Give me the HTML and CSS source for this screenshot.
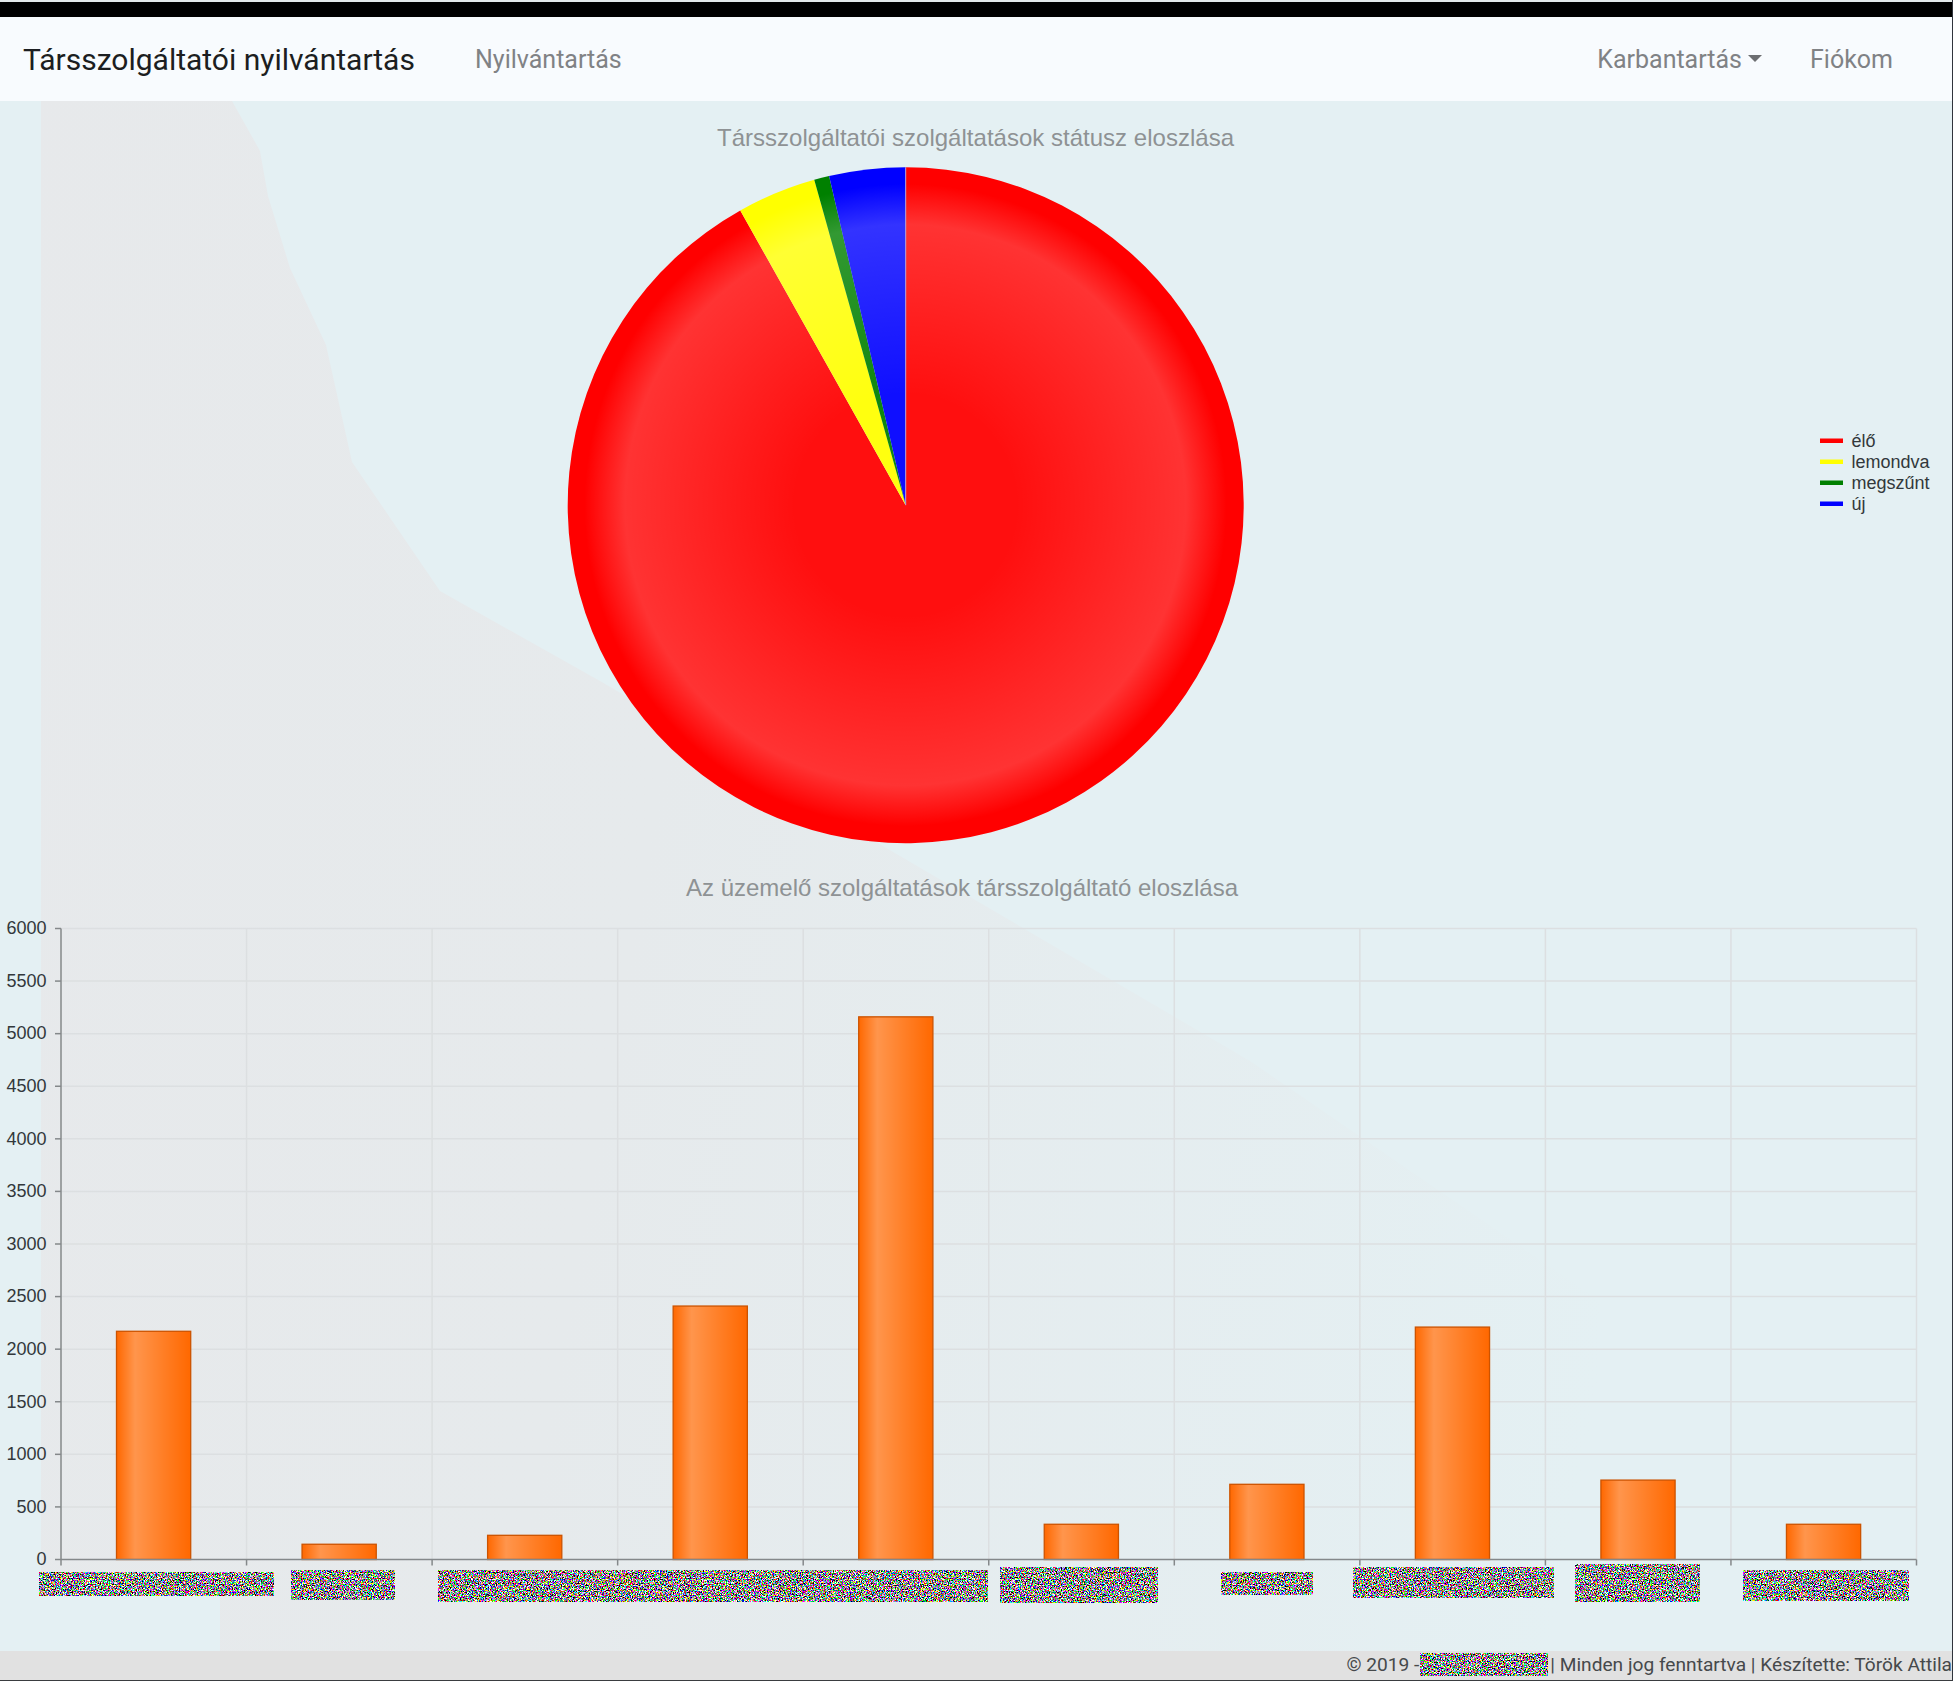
FILE: index.html
```
<!DOCTYPE html>
<html lang="hu">
<head>
    <meta charset="UTF-8">
    <meta name="viewport" content="width=device-width, initial-scale=1.0">
    <title>Társszolgáltatói nyilvántartás</title>
    <link rel="stylesheet" href="styles.css">
</head>
<body>
    <div class="top-strip"></div>

    <nav class="navbar">
        <a class="navbar-brand">Társszolgáltatói nyilvántartás</a>
        <a class="nav-link">Nyilvántartás</a>
        <div class="navbar-right">
            <a class="nav-link dropdown-toggle">Karbantartás</a>
            <a class="nav-link">Fiókom</a>
        </div>
    </nav>

    <main class="charts">
        <svg class="chart" width="1952" height="750" viewBox="0 101 1952 750">
            <defs>
                <radialGradient id="bevel" gradientUnits="userSpaceOnUse" cx="905.5" cy="505" r="338">
                    <stop offset="0" stop-color="#fff" stop-opacity="0.06"/>
                    <stop offset="0.33" stop-color="#fff" stop-opacity="0.06"/>
                    <stop offset="0.83" stop-color="#fff" stop-opacity="0.2"/>
                    <stop offset="0.95" stop-color="#fff" stop-opacity="0"/>
                </radialGradient>
            </defs>
            <text class="chart-title" x="717" y="146" textLength="517">Társszolgáltatói szolgáltatások státusz eloszlása</text>
            <g id="pie"></g>
            <g id="legend"></g>
        </svg>

        <svg class="chart" width="1952" height="800" viewBox="0 851 1952 800">
            <defs>
                <linearGradient id="glass">
                    <stop offset="0" stop-color="#fff" stop-opacity="0"/>
                    <stop offset="0.25" stop-color="#fff" stop-opacity="0.3"/>
                    <stop offset="1" stop-color="#fff" stop-opacity="0"/>
                </linearGradient>
                <filter id="noise" x="0" y="0" width="1" height="1" color-interpolation-filters="sRGB">
                    <feTurbulence type="fractalNoise" baseFrequency="0.83" numOctaves="2" seed="4"/>
                    <feColorMatrix values="9 0 0 0 -3.9  0 9 0 0 -3.9  0 0 9 0 -3.9  0 0 0 0 1"/>
                </filter>
            </defs>
            <text class="chart-title" x="686" y="896" textLength="552">Az üzemelő szolgáltatások társszolgáltató eloszlása</text>
            <g id="grid"></g>
            <g id="bars"></g>
            <g id="axis"></g>
            <!-- masked provider names -->
            <g class="masked">
                <rect x="39" y="1572" width="235" height="24"/>
                <rect x="291" y="1570" width="104" height="30"/>
                <rect x="438" y="1570" width="550" height="32"/>
                <rect x="1000" y="1567" width="158" height="36"/>
                <rect x="1221" y="1572" width="92" height="23"/>
                <rect x="1353" y="1567" width="201" height="31"/>
                <rect x="1575" y="1564" width="125" height="38"/>
                <rect x="1743" y="1570" width="166" height="31"/>
            </g>
        </svg>
    </main>

    <footer class="footer">
        <span>© 2019 -</span><span class="masked-name"></span><span>| Minden jog fenntartva | Készítette: Török Attila</span>
    </footer>

    <script src="charts.js"></script>
</body>
</html>
```
FILE: styles.css
```
body {
    font-family: Roboto, "Liberation Sans", sans-serif;
    margin: 0;
    width: 1952px;
    height: 1680px;
    background-color: #e4f0f3;
    border-right: 1px solid #30343c;
    border-bottom: 1px solid #3a3d40;
    overflow: hidden;
}

.top-strip {
    height: 15px;
    background: #000;
    border-top: 2px solid #e3e9ea;
}

/* Navbar */
.navbar {
    display: flex;
    align-items: center;
    height: 84px;
    padding: 2px 59px 0 23px;
    box-sizing: border-box;
    background: #f8fbfe;
}

.navbar-brand {
    font-size: 30px;
    line-height: 36px;
    color: #1c1e21;
    width: 452px;
    white-space: nowrap;
}

.nav-link {
    font-size: 25px;
    line-height: 36px;
    color: #808285;
}

.navbar-right {
    display: flex;
    gap: 48px;
    margin-left: auto;
}

.dropdown-toggle::after {
    content: "";
    display: inline-block;
    margin-left: 6px;
    vertical-align: 6px;
    border-top: 7px solid #6c6e71;
    border-left: 7px solid transparent;
    border-right: 7px solid transparent;
}

/* Charts */
.charts {
    position: relative;
    height: 1550px;
    z-index: 0;
}

.charts::before {
    content: "";
    position: absolute;
    inset: 0;
    z-index: -1;
    background: linear-gradient(100deg, #e7e9eb 0, #e6eaec 35%, #e4f0f3 82%);
    clip-path: polygon(41px 0, 232px 0, 260px 50px, 268px 95px, 290px 167px, 326px 244px, 352px 361px, 440px 490px, 600px 580px, 900px 755px, 1250px 960px, 1600px 1200px, 1600px 1550px, 220px 1550px, 220px 1480px, 41px 1480px);
}

.chart {
    display: block;
    font-family: "Liberation Sans", Arial, sans-serif;
    font-size: 18px;
    fill: #32383b;
}

.chart-title {
    font-size: 24px;
    fill: #8e9294;
}

.grid-line {
    stroke: #dcdfe1;
    stroke-width: 1.5;
}

.axis-line {
    stroke: #84888a;
    stroke-width: 1.5;
}

.axis-label {
    text-anchor: end;
}

.bar {
    fill: #ff6800;
}

.bar-gloss {
    fill: url(#glass);
    stroke: #cc5300;
    stroke-width: 1.3;
}

.masked rect {
    filter: url(#noise);
}

/* Footer */
.footer {
    display: flex;
    justify-content: flex-end;
    height: 29px;
    font-size: 19.15px;
    line-height: 28px;
    color: #46494b;
    background: #e1e1e1;
    white-space: nowrap;
}

.masked-name {
    width: 128px;
    height: 23px;
    margin: 2px 2px 0 1px;
    filter: url(#noise);
    background: #888;
}
```
FILE: charts.js
```
const NS = 'http://www.w3.org/2000/svg';

function add(parentId, tag, attrs, text) {
    const el = document.createElementNS(NS, tag);
    for (const key in attrs) el.setAttribute(key, attrs[key]);
    if (text !== undefined) el.textContent = text;
    document.getElementById(parentId).appendChild(el);
}

// Status pie, angles in degrees clockwise from the top
const cx = 905.7, cy = 505.2, r = 338;
const statuses = [
    { name: 'élő', color: '#ff0000', from: 0, to: 330.7 },
    { name: 'lemondva', color: '#ffff00', from: 330.7, to: 344.3 },
    { name: 'megszűnt', color: '#008000', from: 344.3, to: 346.9 },
    { name: 'új', color: '#0000ff', from: 346.9, to: 360 }
];

function point(deg) {
    const a = deg * Math.PI / 180;
    return (cx + r * Math.sin(a)).toFixed(2) + ' ' + (cy - r * Math.cos(a)).toFixed(2);
}

statuses.forEach((s, i) => {
    const large = s.to - s.from > 180 ? 1 : 0;
    const d = `M${cx} ${cy} L${point(s.from)} A${r} ${r} 0 ${large} 1 ${point(s.to)} Z`;
    add('pie', 'path', { d: d, fill: s.color });
    add('pie', 'path', { d: d, fill: 'url(#bevel)' });

    const y = 441 + i * 21;
    add('legend', 'rect', { x: 1820, y: y - 2.5, width: 23, height: 4.5, fill: s.color });
    add('legend', 'text', { x: 1851.5, y: y + 6 }, s.name);
});
add('pie', 'line', { x1: cx, y1: cy, x2: cx, y2: cy - r, stroke: '#b9a0d0', 'stroke-width': 1 });

// Provider bar chart
const left = 61, right = 1916.5, top0 = 928.5, bottom = 1559.5;
const step = (right - left) / 10;
const values = [2170, 145, 230, 2410, 5160, 335, 715, 2210, 755, 335];
const scale = (bottom - top0) / 6000;

for (let v = 0; v <= 6000; v += 500) {
    const y = bottom - v * scale;
    if (v) add('grid', 'line', { class: 'grid-line', x1: left, x2: right, y1: y, y2: y });
    add('axis', 'line', { class: 'axis-line', x1: left - 6, x2: left, y1: y, y2: y });
    add('axis', 'text', { class: 'axis-label', x: 46.5, y: y + 5.8 }, v);
}

for (let i = 0; i <= 10; i++) {
    const x = left + i * step;
    if (i) add('grid', 'line', { class: 'grid-line', x1: x, x2: x, y1: top0, y2: bottom });
    add('axis', 'line', { class: 'axis-line', x1: x, x2: x, y1: bottom, y2: bottom + 6 });
}

values.forEach((v, i) => {
    const box = { x: left + i * step + 55.5, y: bottom - v * scale, width: 74.2, height: v * scale };
    add('bars', 'rect', { class: 'bar', ...box });
    add('bars', 'rect', { class: 'bar-gloss', ...box });
});

add('axis', 'line', { class: 'axis-line', x1: left, x2: left, y1: top0, y2: bottom });
add('axis', 'line', { class: 'axis-line', x1: left, x2: right, y1: bottom, y2: bottom });
```
